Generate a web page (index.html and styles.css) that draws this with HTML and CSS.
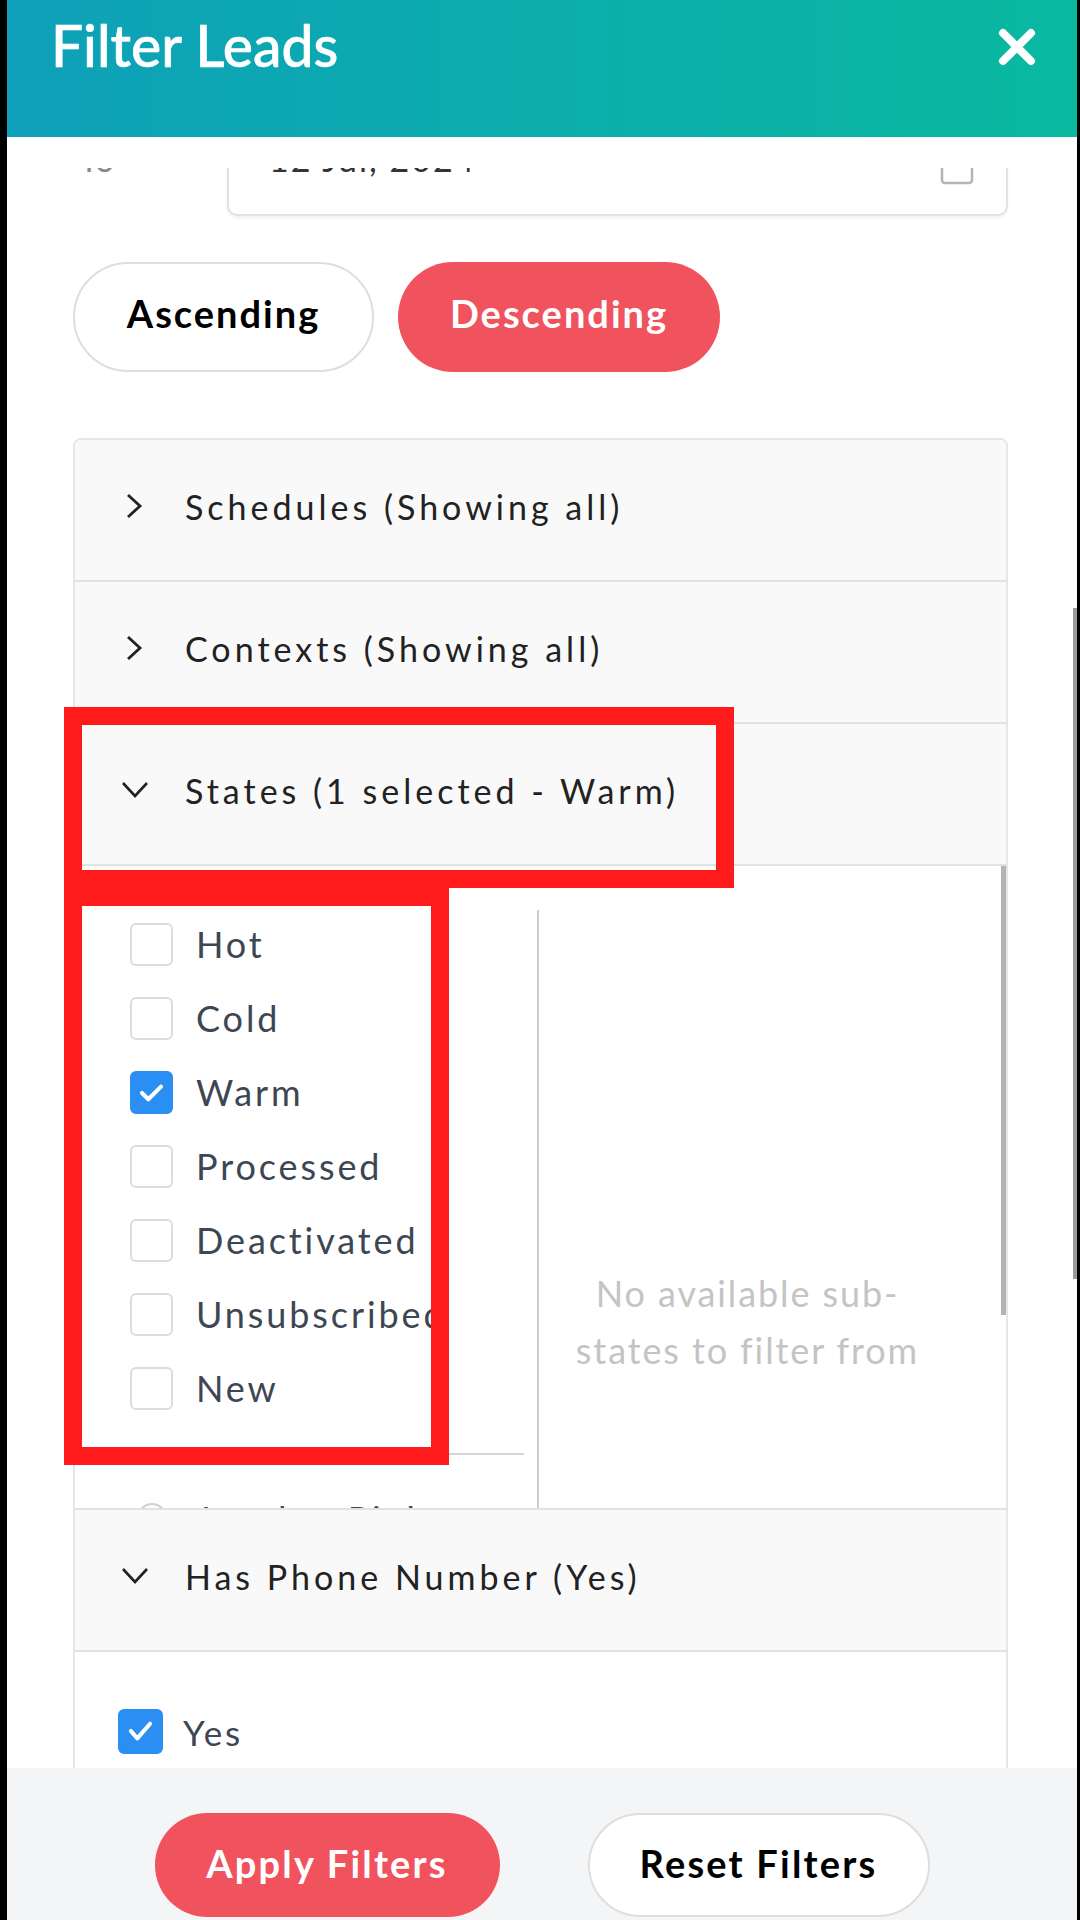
FILE: index.html
```html
<!DOCTYPE html>
<html lang="en">
<head>
<meta charset="utf-8">
<title>Filter Leads</title>
<link rel="stylesheet" href="styles.css">
</head>
<body>
<div class="app">
  <header class="topbar">
    <h1 class="title">Filter Leads</h1>
    <svg class="close" viewBox="0 0 38 38" aria-label="Close"><path d="M5 5 L33 33 M33 5 L5 33" stroke="#fff" stroke-width="8" stroke-linecap="round" fill="none"/></svg>
  </header>
  <div class="topgap"></div>
  <main class="scroll">
    <div class="date-row">
      <span class="date-label">To</span>
      <div class="date-input">
        <span class="date-value">12 Jul, 2024</span>
        <svg class="cal" viewBox="0 0 34 34"><rect x="2" y="5" width="30" height="27" rx="3" fill="none" stroke="#b5b5b5" stroke-width="2.5"/><path d="M2 12 H32" stroke="#b5b5b5" stroke-width="2.5"/></svg>
      </div>
    </div>

    <div class="sort">
      <button class="pill pill-outline sort-asc">Ascending</button>
      <button class="pill pill-fill sort-desc">Descending</button>
    </div>

    <div class="accordion">
      <div class="acc-head">
        <svg class="chev" viewBox="0 0 28 28"><path d="M7 3 L19 14 L7 25" fill="none" stroke="#222" stroke-width="2.8"/></svg>
        <span class="acc-title">Schedules (Showing all)</span>
      </div>
      <div class="acc-head">
        <svg class="chev" viewBox="0 0 28 28"><path d="M7 3 L19 14 L7 25" fill="none" stroke="#222" stroke-width="2.8"/></svg>
        <span class="acc-title">Contexts (Showing all)</span>
      </div>
      <div class="acc-head">
        <svg class="chev" viewBox="0 0 28 28"><path d="M2 7 L14 20 L26 7" fill="none" stroke="#222" stroke-width="2.6"/></svg>
        <span class="acc-title">States (1 selected - Warm)</span>
      </div>
      <div class="states-body">
        <div class="states-list">
          <ul class="checks">
            <li class="check-row"><span class="box"></span><span class="check-label">Hot</span></li>
            <li class="check-row"><span class="box"></span><span class="check-label">Cold</span></li>
            <li class="check-row"><span class="box box-on"><svg viewBox="0 0 43 43"><path d="M11 22 L18 29 L32 15" fill="none" stroke="#fff" stroke-width="4.5" stroke-linecap="round" stroke-linejoin="round"/></svg></span><span class="check-label">Warm</span></li>
            <li class="check-row"><span class="box"></span><span class="check-label">Processed</span></li>
            <li class="check-row"><span class="box"></span><span class="check-label">Deactivated</span></li>
            <li class="check-row"><span class="box"></span><span class="check-label">Unsubscribed</span></li>
            <li class="check-row"><span class="box"></span><span class="check-label">New</span></li>
          </ul>
          <div class="list-sep"></div>
          <div class="radio-row"><span class="radio"></span><span class="check-label">Landon Pink</span></div>
        </div>
        <div class="substates">
          <p class="empty">No available sub-<br>states to filter from</p>
        </div>
        <div class="inner-scrollbar"></div>
      </div>
      <div class="acc-head">
        <svg class="chev" viewBox="0 0 28 28"><path d="M2 7 L14 20 L26 7" fill="none" stroke="#222" stroke-width="2.6"/></svg>
        <span class="acc-title">Has Phone Number (Yes)</span>
      </div>
      <div class="phone-body">
        <div class="check-row yes-row"><span class="box box-on box-yes"><svg viewBox="0 0 45 45"><path d="M12 22 L19 30 L33 14" fill="none" stroke="#fff" stroke-width="4.5" stroke-linecap="round" stroke-linejoin="round"/></svg></span><span class="check-label">Yes</span></div>
      </div>
    </div>
  </main>
  <footer class="footer">
    <button class="pill pill-fill foot-btn apply">Apply Filters</button>
    <button class="pill pill-outline foot-btn reset">Reset Filters</button>
  </footer>

  <div class="page-scrollbar"></div>
  <div class="annot annot-1"></div>
  <div class="annot annot-2"></div>
</div>
</body>
</html>
```

FILE: styles.css
```css
* { box-sizing: border-box; }
html, body { margin: 0; padding: 0; }
body {
  background: #000;
  width: 1080px;
  height: 1920px;
  overflow: hidden;
  font-family: "Lato", "Open Sans", sans-serif;
}
.app {
  margin: 0 3px 0 7px;
  height: 1920px;
  background: #fff;
  display: flex;
  flex-direction: column;
  position: relative;
  overflow: hidden;
}

/* header */
.topbar {
  flex: 0 0 137px;
  background: linear-gradient(90deg, #0ea0b9 0%, #0bafab 55%, #0ab89f 100%);
  display: flex;
  justify-content: space-between;
  align-items: flex-start;
  padding: 10px 41px 0 44px;
}
.title {
  margin: 0;
  font-size: 57px;
  line-height: 70px;
  font-weight: 500;
  color: #fff;
  -webkit-text-stroke: 0.6px #fff;
}
.close { width: 38px; height: 38px; margin-top: 18px; }
.topgap { flex: 0 0 31px; background: #fff; }

/* scroll area */
.scroll {
  flex: 1;
  overflow: hidden;
  padding: 0 69px 0 66px;
}
.date-row {
  margin-top: -42px;
  height: 90px;
  display: flex;
  align-items: center;
  padding-bottom: 26px;
}
.date-label {
  width: 154px;
  padding-left: 6px;
  font-size: 34px;
  color: #888;
}
.date-input {
  flex: 1;
  height: 90px;
  margin-bottom: -26px;
  border: 2px solid #e2e2e2;
  border-radius: 10px;
  box-shadow: 0 2px 3px rgba(0,0,0,0.06);
  display: flex;
  align-items: center;
  justify-content: space-between;
  padding: 0 32px 26px 40px;
}
.date-value { font-size: 34px; color: #333; letter-spacing: 2px; }
.cal { width: 34px; height: 34px; margin-top: 20px; }

.sort {
  margin-top: 46px;
  display: flex;
  gap: 24px;
}
.pill {
  font-family: inherit;
  height: 110px;
  border-radius: 55px;
  font-size: 38px;
  font-weight: 700;
  letter-spacing: 2px;
  cursor: pointer;
  padding: 0 0 8px 0;
}
.pill-outline { background: #fff; color: #000; border: 2px solid #dedede; }
.pill-fill { background: #f0535e; color: #fff; border: 0; }
.sort-asc { width: 301px; }
.sort-desc { width: 322px; }

/* accordion */
.accordion {
  margin-top: 66px;
  border: 2px solid #e6e6e6;
  border-bottom: 0;
  border-radius: 8px 8px 0 0;
}
.acc-head {
  height: 142px;
  background: #f9f9f9;
  border-bottom: 2px solid #e2e2e2;
  display: flex;
  align-items: center;
  padding-left: 46px;
  padding-bottom: 8px;
}
.acc-head:first-child { border-radius: 6px 6px 0 0; }
.chev { width: 28px; height: 28px; flex: none; }
.acc-title {
  margin-left: 36px;
  font-size: 34px;
  color: #222;
  letter-spacing: 4px;
}

.states-body {
  height: 644px;
  border-bottom: 2px solid #e2e2e2;
  display: flex;
  position: relative;
  overflow: hidden;
  background: #fff;
}
.states-list {
  width: 462px;
  flex: none;
  padding-top: 41px;
}
.checks { list-style: none; margin: 0; padding: 0; }
.check-row {
  height: 74px;
  display: flex;
  align-items: center;
  padding-left: 55px;
}
.box {
  width: 43px;
  height: 43px;
  flex: none;
  border: 2px solid #dcdcdc;
  border-radius: 6px;
  background: #fff;
}
.box svg { display: block; width: 100%; height: 100%; }
.box-on { background: #2a8ef2; border-color: #2a8ef2; }
.check-label {
  margin-left: 23px;
  font-size: 36px;
  color: #3d4653;
  letter-spacing: 2.9px;
  white-space: nowrap;
}
.list-sep {
  margin-top: 28px;
  width: 449px;
  height: 2px;
  background: #d4d4d4;
}
.radio-row {
  margin-top: 48px;
  display: flex;
  align-items: flex-start;
  padding-left: 62px;
}
.radio {
  width: 30px;
  height: 30px;
  border: 2px solid #d0d0d0;
  border-radius: 50%;
  flex: none;
}
.radio-row .check-label { margin-left: 34px; margin-top: -6px; }

.substates {
  flex: 1;
  margin-top: 44px;
  border-left: 2px solid #cdcdcd;
  padding: 355px 50px 0 0;
}
.empty {
  margin: 0;
  text-align: center;
  font-size: 36px;
  line-height: 57px;
  color: #c4c4c4;
  letter-spacing: 1.9px;
}
.inner-scrollbar {
  position: absolute;
  right: 0;
  top: 0;
  width: 5px;
  height: 449px;
  background: #b4b4b4;
}

.phone-body {
  height: 300px;
  background: #fff;
  padding-top: 57px;
}
.yes-row { padding-left: 43px; height: 45px; }
.box-yes { width: 45px; height: 45px; border-radius: 6px; }
.yes-row .check-label { margin-left: 20px; font-size: 35px; letter-spacing: 2.8px; }

/* footer */
.footer {
  flex: 0 0 152px;
  background: #f4f5f6;
  display: flex;
  justify-content: center;
  gap: 88px;
  padding-top: 45px;
}
.foot-btn { height: 104px; border-radius: 52px; font-size: 38px; letter-spacing: 2.2px; padding-bottom: 4px; }
.apply { width: 345px; }
.reset { width: 342px; }

/* overlays */
.page-scrollbar {
  position: absolute;
  right: 0;
  top: 608px;
  width: 4px;
  height: 671px;
  background: #9a9a9a;
}
.annot {
  position: absolute;
  border: 18px solid #ff1b1c;
  pointer-events: none;
}
.annot-1 { left: 57px; top: 707px; width: 670px; height: 181px; }
.annot-2 { left: 57px; top: 888px; width: 385px; height: 577px; }
```
